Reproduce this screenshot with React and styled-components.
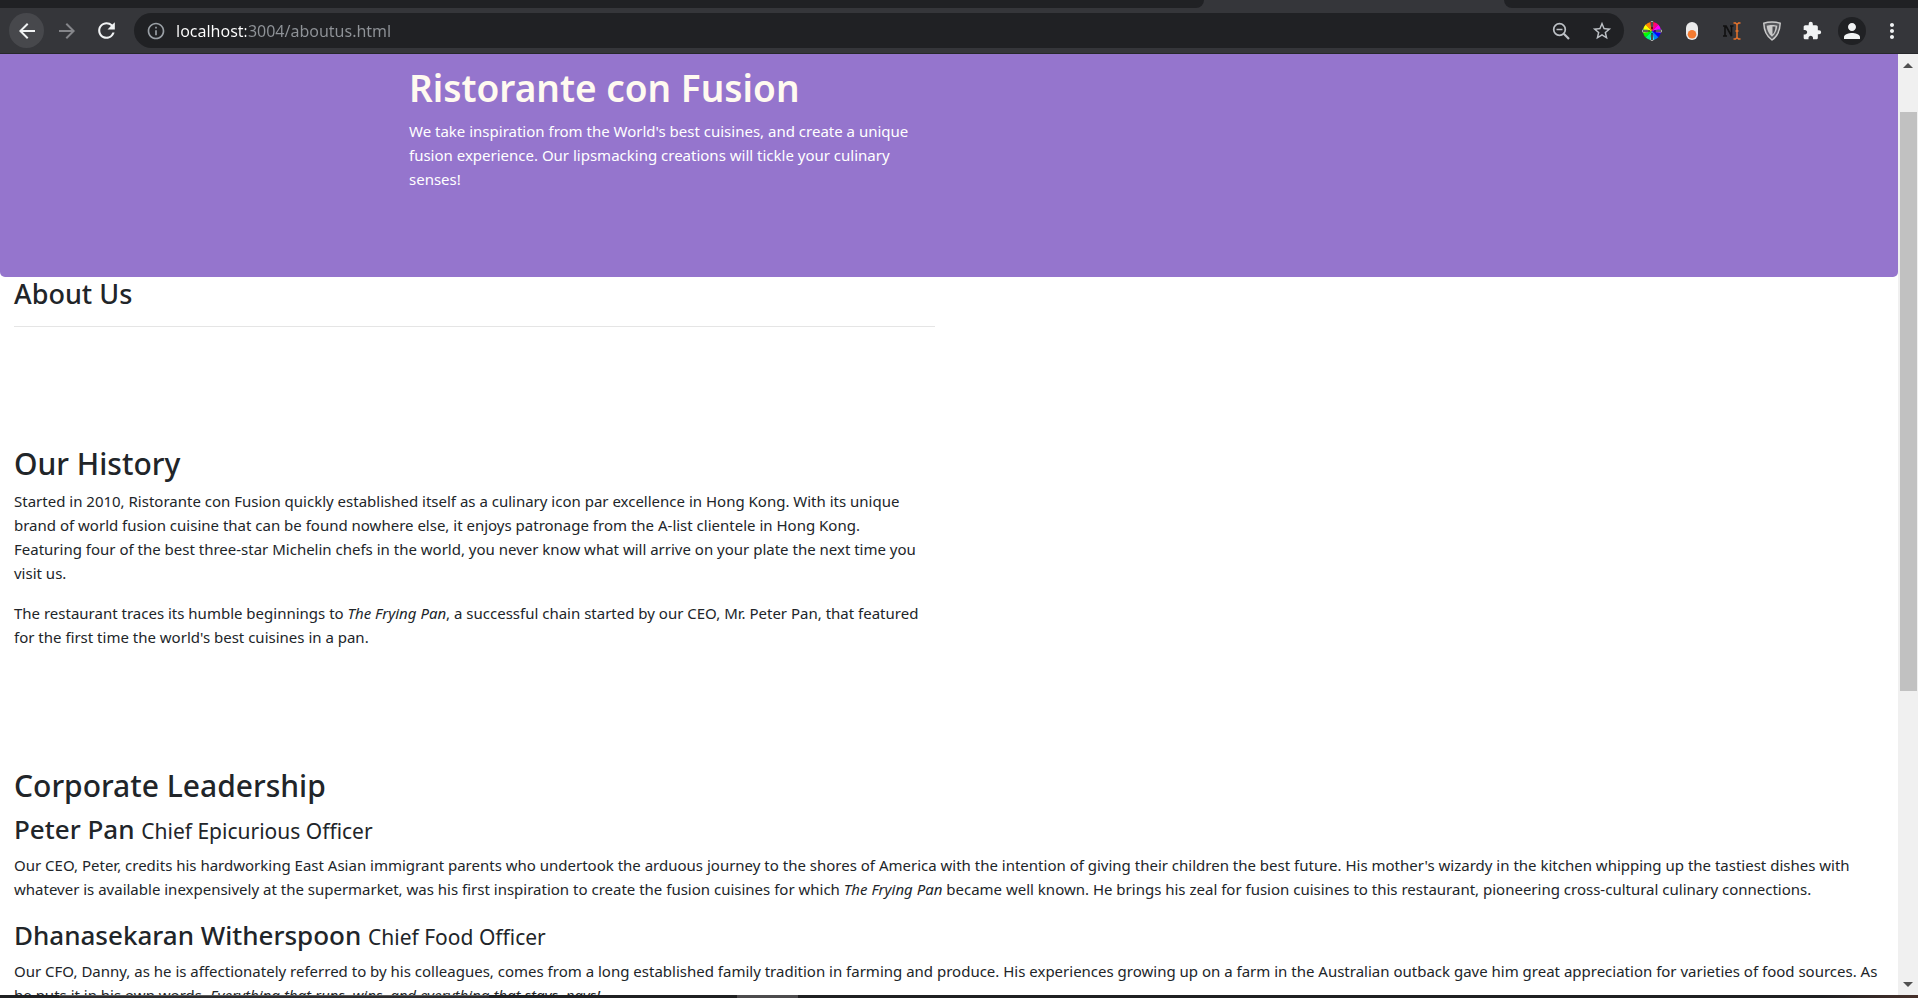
import React from 'react';
import styled, { createGlobalStyle } from 'styled-components';
import {
  MdArrowBack, MdArrowForward, MdRefresh, MdInfoOutline,
  MdStarBorder, MdExtension, MdPerson, MdMoreVert,
} from 'react-icons/md';

const GlobalStyle = createGlobalStyle`
  *, *::before, *::after { box-sizing: border-box; }
  body {
    margin: 0;
    background: #fff;
    color: #212529;
    font-family: "Segoe UI", "Noto Sans", "Open Sans", sans-serif;
    font-size: 15px;
    line-height: 24px;
  }
`;

const Window = styled.div`
  display: flex;
  flex-direction: column;
  height: 100vh;
  overflow: hidden;
`;

const TabStrip = styled.div`
  display: flex;
  flex: none;
  height: 8px;
  background: #35363a;
`;

const TabGroup = styled.div`
  flex: ${(p) => p.$grow};
  background: #202124;
  border-radius: ${(p) => (p.$side === 'left' ? '0 0 10px 0' : '0 0 0 10px')};
`;

const ActiveTab = styled.div`
  flex: 300;
`;

const Toolbar = styled.header`
  display: flex;
  flex: none;
  align-items: center;
  gap: 10px;
  height: 46px;
  padding: 0 9px;
  background: #35363a;
  border-bottom: 1px solid #27282b;
`;

const ButtonGroup = styled.div`
  display: flex;
  align-items: center;
  gap: 5px;
`;

const IconButton = styled.button`
  display: flex;
  align-items: center;
  justify-content: center;
  width: 35px;
  height: 35px;
  padding: 0;
  border: 0;
  border-radius: 50%;
  background: ${(p) => (p.$active ? '#47484c' : 'transparent')};
  color: ${(p) => p.$color || '#f1f3f4'};
`;

const Avatar = styled.span`
  display: flex;
  align-items: center;
  justify-content: center;
  width: 28px;
  height: 28px;
  border-radius: 50%;
  background: #202124;
`;

const AddressBar = styled.form`
  display: flex;
  flex: 1;
  align-items: center;
  gap: 5px;
  height: 35px;
  padding: 0 5px 0 12px;
  border-radius: 18px;
  background: #202124;
  color: #9aa0a6;
`;

const AddressInput = styled.input`
  flex: 1;
  min-width: 0;
  height: 28px;
  margin: 0 0 0 5px;
  padding: 0;
  border: 0;
  outline: 0;
  font: inherit;
  font-size: 16px;
  color: transparent;
  background: linear-gradient(90deg, #fff 70px, #8f9398 70px);
  -webkit-background-clip: text;
  background-clip: text;
`;

const Viewport = styled.div`
  display: flex;
  flex: 1;
  min-height: 0;
`;

const Page = styled.div`
  flex: 1;
  min-width: 0;
  overflow: hidden;
`;

const Jumbotron = styled.section`
  padding: 9px 0 70px;
  border-radius: 0 0 5px 5px;
  background: #9575cd;
  color: #fffaf0;
`;

const Container = styled.div`
  max-width: 1140px;
  margin: 0 auto;
  padding: 0 30px;
`;

const Intro = styled.div`
  max-width: 520px;
`;

const SiteTitle = styled.h1`
  margin: 0 0 6px;
  font-size: 37px;
  font-weight: 600;
  line-height: 50px;
`;

const Paragraph = styled.p`
  margin: 0 0 16px;
`;

const Lead = styled(Paragraph)`
  color: #fff;
`;

const Section = styled.section`
  width: ${(p) => (p.$half ? '50%' : '100%')};
  padding: 0 14px;
  margin-bottom: ${(p) => p.$after || 0}px;

  ${Paragraph} {
    padding-right: ${(p) => (p.$half ? 10 : 0)}px;
  }
`;

const PageHeading = styled.h3`
  margin: 0;
  font-size: 27px;
  font-weight: 500;
  line-height: 34px;
`;

const Rule = styled.hr`
  margin: 15px 0 0;
  border: 0;
  border-top: 1px solid #e5e5e5;
`;

const SectionHeading = styled.h2`
  margin: 0 0 4px;
  font-size: 30px;
  font-weight: 500;
  line-height: 42px;
`;

const PersonHeading = styled.h3`
  margin: 0 0 6px;
  font-size: 26px;
  font-weight: 500;
  line-height: 36px;

  small {
    font-size: 21px;
    font-weight: 400;
    line-height: 1;
  }
`;

const ScrollTrack = styled.div`
  display: flex;
  flex: none;
  flex-direction: column;
  align-items: center;
  width: 20px;
  background: #f0f0f0;
`;

const ScrollArrow = styled.button`
  display: flex;
  flex: none;
  align-items: center;
  justify-content: center;
  width: 20px;
  height: 22px;
  padding: 0;
  border: 0;
  background: transparent;
`;

const ScrollSpace = styled.div`
  flex: ${(p) => p.$grow};
`;

const ScrollThumb = styled.div`
  flex: 579;
  width: 17px;
  background: #c1c1c1;
`;

const Taskbar = styled.footer`
  display: flex;
  flex: none;
  height: 3px;
  background: linear-gradient(90deg, #1f2022 95%, #46302a);
`;

const TaskbarPart = styled.div`
  flex: ${(p) => p.$grow};
  background: ${(p) => p.$fill || 'transparent'};
  border-top: 1px solid ${(p) => p.$edge || 'transparent'};
`;

const wedges = Array.from({ length: 12 }, (_, i) => {
  const a = ((i * 30 - 15) * Math.PI) / 180;
  const b = ((i * 30 + 16) * Math.PI) / 180;
  const at = (t) => `${10 + 9 * Math.sin(t)} ${10 - 9 * Math.cos(t)}`;
  return { d: `M10 10L${at(a)}A9 9 0 0 1 ${at(b)}Z`, fill: `hsl(${(360 - i * 30) % 360} 100% 50%)` };
});

const ColorWheelIcon = () => (
  <svg width="20" height="20" viewBox="0 0 20 20" aria-hidden="true">
    {wedges.map((w) => <path key={w.d} d={w.d} fill={w.fill} />)}
    <path d="M10 0V6M10 14V20M0 10H6M14 10H20" stroke="#aaa" strokeWidth="2.4" />
    <path d="M10 1V8M10 12V19M1 10H8M12 10H19" stroke="#111" strokeWidth="1.2" />
  </svg>
);

const ToggleIcon = () => (
  <svg width="20" height="20" viewBox="0 0 20 20" aria-hidden="true">
    <rect x="4" y="1" width="12" height="18" rx="6" fill="#ebebeb" />
    <circle cx="10" cy="13.2" r="4.3" fill="#f47b30" />
  </svg>
);

const CursorIcon = () => (
  <svg width="20" height="20" viewBox="0 0 20 20" fill="none" aria-hidden="true">
    <path d="M1 5H4L9.500 15V5M8 5H11.500M3 5V15M1 15H5M4 5L9.500 15" stroke="#111" strokeWidth="1.6" />
    <path d="M11.500 2H13.500L15 3.500L16.500 2H18.500M15 3.500V16.500M11.500 18H13.500L15 16.500L16.500 18H18.500M13.500 10H16.500" stroke="#e8742c" strokeWidth="1.5" />
  </svg>
);

const ShieldIcon = () => (
  <svg width="20" height="20" viewBox="0 0 20 20" fill="none" aria-hidden="true">
    <path d="M10 1C13 1 16 1.500 18.200 2.300C18 9 16 15 10 19C4 15 2 9 1.800 2.300C4 1.500 7 1 10 1Z" fill="#55565a" stroke="#c9c9c9" strokeWidth="1.500" />
    <path d="M10 4C12.300 4 13.800 4.200 15.300 4.700C15 9 13.300 13 10 15.800C6.700 13 5 9 4.700 4.700C6.200 4.200 7.700 4 10 4Z" fill="#c9c9c9" />
    <path d="M10.500 5.500H13.500C13.300 9 12.500 11.500 10.500 13.500Z" fill="#4a4b4f" />
  </svg>
);

const ZoomOutIcon = () => (
  <svg width="20" height="20" viewBox="1 0 20 20" fill="none" stroke="currentColor" aria-hidden="true">
    <circle cx="8.500" cy="8.500" r="5.800" strokeWidth="1.700" />
    <path d="M12.800 12.800L18 18" strokeWidth="2.200" />
    <path d="M5.500 8.500H11.500" strokeWidth="1.500" />
  </svg>
);

const Triangle = ({ down }) => (
  <svg width="10" height="5" viewBox="0 0 10 5" aria-hidden="true">
    <path d={down ? 'M0 0H10L5 5Z' : 'M0 5H10L5 0Z'} fill="#505050" />
  </svg>
);

export default function App() {
  return (
    <Window>
      <GlobalStyle />
      <TabStrip>
        <TabGroup $grow={1204} $side="left" />
        <ActiveTab />
        <TabGroup $grow={414} $side="right" />
      </TabStrip>
      <Toolbar>
        <ButtonGroup>
          <IconButton $active aria-label="Back"><MdArrowBack size={24} /></IconButton>
          <IconButton $color="#85868a" aria-label="Forward"><MdArrowForward size={24} /></IconButton>
          <IconButton aria-label="Reload"><MdRefresh size={25} /></IconButton>
        </ButtonGroup>
        <AddressBar onSubmit={(e) => e.preventDefault()}>
          <MdInfoOutline size={20} />
          <AddressInput aria-label="Address" type="text" defaultValue="localhost:3004/aboutus.html" />
          <IconButton type="button" $color="#bdc1c6" aria-label="Zoom"><ZoomOutIcon /></IconButton>
          <IconButton type="button" $color="#bdc1c6" aria-label="Bookmark"><MdStarBorder size={22} /></IconButton>
        </AddressBar>
        <ButtonGroup>
          <IconButton aria-label="Color picker"><ColorWheelIcon /></IconButton>
          <IconButton aria-label="Toggle"><ToggleIcon /></IconButton>
          <IconButton aria-label="Text cursor"><CursorIcon /></IconButton>
          <IconButton aria-label="Shield"><ShieldIcon /></IconButton>
          <IconButton aria-label="Extensions"><MdExtension size={20} /></IconButton>
          <IconButton aria-label="Profile"><Avatar><MdPerson size={24} /></Avatar></IconButton>
          <IconButton aria-label="Menu"><MdMoreVert size={24} /></IconButton>
        </ButtonGroup>
      </Toolbar>
      <Viewport>
        <Page>
          <Jumbotron>
            <Container>
              <Intro>
                <SiteTitle>Ristorante con Fusion</SiteTitle>
                <Lead>
                  We take inspiration from the World's best cuisines, and create a unique fusion
                  experience. Our lipsmacking creations will tickle your culinary senses!
                </Lead>
              </Intro>
            </Container>
          </Jumbotron>
          <main>
            <Section $half $after={116}>
              <PageHeading>About Us</PageHeading>
              <Rule />
            </Section>
            <Section $half $after={116}>
              <SectionHeading>Our History</SectionHeading>
              <Paragraph>
                Started in 2010, Ristorante con Fusion quickly established itself as a culinary icon
                par excellence in Hong Kong. With its unique brand of world fusion cuisine that can be
                found nowhere else, it enjoys patronage from the A-list clientele in Hong Kong.
                Featuring four of the best three-star Michelin chefs in the world, you never know what
                will arrive on your plate the next time you visit us.
              </Paragraph>
              <Paragraph>
                The restaurant traces its humble beginnings to <em>The Frying Pan</em>, a successful
                chain started by our CEO, Mr. Peter Pan, that featured for the first time the world's
                best cuisines in a pan.
              </Paragraph>
            </Section>
            <Section>
              <SectionHeading>Corporate Leadership</SectionHeading>
              <PersonHeading>Peter Pan <small>Chief Epicurious Officer</small></PersonHeading>
              <Paragraph>
                Our CEO, Peter, credits his hardworking East Asian immigrant parents who undertook the
                arduous journey to the shores of America with the intention of giving their children
                the best future. His mother's wizardy in the kitchen whipping up the tastiest dishes
                with whatever is available inexpensively at the supermarket, was his first inspiration
                to create the fusion cuisines for which <em>The Frying Pan</em> became well known. He
                brings his zeal for fusion cuisines to this restaurant, pioneering cross-cultural
                culinary connections.
              </Paragraph>
              <PersonHeading>Dhanasekaran Witherspoon <small>Chief Food Officer</small></PersonHeading>
              <Paragraph>
                Our CFO, Danny, as he is affectionately referred to by his colleagues, comes from a
                long established family tradition in farming and produce. His experiences growing up
                on a farm in the Australian outback gave him great appreciation for varieties of food
                sources. As he puts it in his own words, <em>Everything that runs, wins, and
                everything that stays, pays!</em>
              </Paragraph>
            </Section>
          </main>
        </Page>
        <ScrollTrack>
          <ScrollArrow aria-label="Scroll up"><Triangle /></ScrollArrow>
          <ScrollSpace $grow={36} />
          <ScrollThumb />
          <ScrollSpace $grow={282} />
          <ScrollArrow aria-label="Scroll down"><Triangle down /></ScrollArrow>
        </ScrollTrack>
      </Viewport>
      <Taskbar>
        <TaskbarPart $grow={59} />
        <TaskbarPart $grow={430} $fill="#2b2b2d" $edge="#5a5a5a" />
        <TaskbarPart $grow={248} />
        <TaskbarPart $grow={61} $fill="#4c4b4d" $edge="#4c4b4d" />
        <TaskbarPart $grow={1120} />
      </Taskbar>
    </Window>
  );
}
